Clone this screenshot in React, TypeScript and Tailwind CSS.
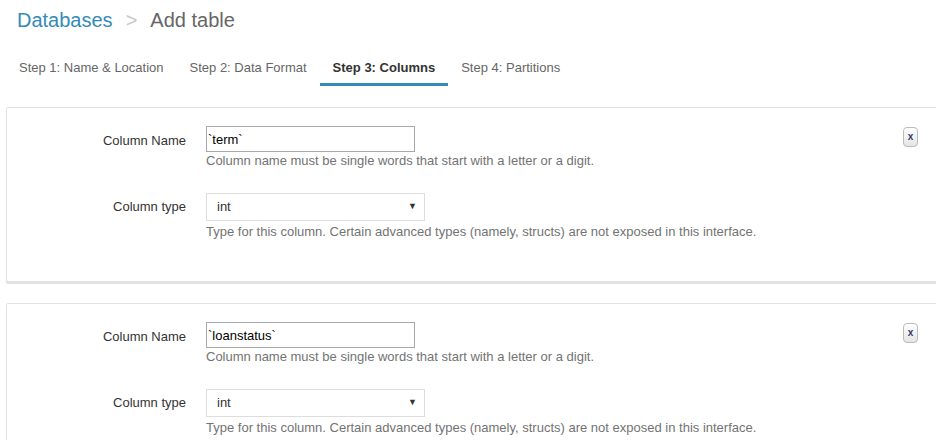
const tabs = [
  { label: "Step 1: Name & Location", active: false },
  { label: "Step 2: Data Format", active: false },
  { label: "Step 3: Columns", active: true },
  { label: "Step 4: Partitions", active: false },
];

const columns = [
  { name: "`term`", type: "int" },
  { name: "`loanstatus`", type: "int" },
];

function ColumnCard({ name, type }: { name: string; type: string }) {
  return (
    <div className="flex w-[950px] h-[175px] mb-[21px] border border-[#e3e3e3] rounded-[2px] bg-white shadow-[0_2px_1px_rgba(0,0,0,0.12)]">
      <div className="flex-1 flex flex-col pt-[18px]">
        <div className="flex">
          <div className="w-[179px] h-[26px] pt-[3px] flex items-center justify-end text-[13px] text-[#333]">
            Column Name
          </div>
          <div className="ml-[20px] flex flex-col">
            <input
              readOnly
              value={name}
              className="w-[209px] h-[26px] border border-[#a9a9a9] px-[1px] text-[13px] text-black outline-none"
            />
            <div className="text-[13px] leading-[18px] text-[#737373]">
              Column name must be single words that start with a letter or a digit.
            </div>
          </div>
        </div>
        <div className="flex mt-[23px]">
          <div className="w-[179px] h-[28px] flex items-center justify-end text-[13px] text-[#333]">
            Column type
          </div>
          <div className="ml-[20px] flex flex-col">
            <div className="w-[219px] h-[28px] border border-[#ddd] flex items-center justify-between pl-[10px] pr-[7px] text-[13px] text-[#333]">
              <span>{type}</span>
              <span className="text-[9px] text-[#333]">▼</span>
            </div>
            <div className="mt-[2px] text-[13px] leading-[18px] text-[#737373]">
              Type for this column. Certain advanced types (namely, structs) are not exposed in this interface.
            </div>
          </div>
        </div>
      </div>
      <div className="mt-[19px] mr-[37px]">
        <div className="w-[15px] h-[20px] rounded-[4px] border border-[#bbb] bg-gradient-to-b from-white to-[#e4e4e4] flex items-center justify-center text-[10px] font-bold leading-none text-[#2b3a6b]">
          x
        </div>
      </div>
    </div>
  );
}

export default function App() {
  return (
    <div className="w-[936px] h-[440px] overflow-hidden bg-white font-['Liberation_Sans',Arial,sans-serif]">
      <div className="pl-[17px] pt-[8px] text-[20px] leading-[24px]">
        <span className="text-[#338bb8]">Databases</span>
        <span className="text-[#c8c8c8] mx-[13px]">&gt;</span>
        <span className="text-[#666]">Add table</span>
      </div>
      <div className="flex pl-[6px] mt-[26px]">
        {tabs.map((t) => (
          <div
            key={t.label}
            className={
              t.active
                ? "px-[13px] pt-[1px] pb-[6px] leading-[18px] text-[13px] font-bold text-[#333] border-b-[3px] border-[#338bb8]"
                : "px-[13px] pt-[1px] pb-[6px] leading-[18px] text-[13px] text-[#666] border-b-[3px] border-transparent"
            }
          >
            {t.label}
          </div>
        ))}
      </div>
      <div className="ml-[6px] mt-[21px]">
        {columns.map((c) => (
          <ColumnCard key={c.name} name={c.name} type={c.type} />
        ))}
      </div>
    </div>
  );
}
